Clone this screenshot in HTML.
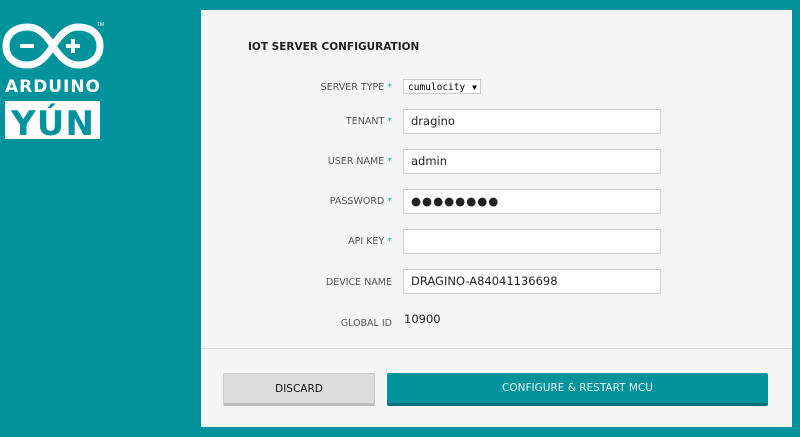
<!DOCTYPE html>
<html><head><style>
body{margin:0;width:800px;height:437px;background:#00939c;position:relative;overflow:hidden;font-family:"DejaVu Sans","Liberation Sans",sans-serif;}
.panel{position:absolute;left:201px;top:10px;width:591px;height:417px;background:#f5f5f5;}
.title{position:absolute;left:47px;top:31px;font-size:10.5px;font-weight:bold;color:#222;}
.lbl{position:absolute;right:400px;font-size:9.5px;color:#555;text-align:right;white-space:nowrap;}
.lbl i{font-style:normal;color:#3aa;margin-left:3px}
.inp{position:absolute;left:202px;width:256px;height:23px;background:#fff;border:1px solid #ccc;font-size:11.5px;color:#222;line-height:23px;padding-left:7px;box-sizing:content-box;width:249px}
.sel{position:absolute;left:202px;top:69px;width:78px;height:15px;background:#fff;border:1px solid #ccc;font-family:"DejaVu Sans Mono",monospace;font-size:9.5px;line-height:15px;padding-left:4px;box-sizing:border-box;}
.div{position:absolute;left:0;top:338px;width:591px;height:1px;background:#ddd}
.b1{position:absolute;left:22px;top:363px;width:152px;height:33px;background:#dcdcdc;border:1px solid #ccc;border-bottom:3px solid #bbb;border-radius:2px;box-sizing:border-box;text-align:center;line-height:30px;font-size:10.5px;color:#111}
.b2{position:absolute;left:186px;top:363px;width:381px;height:33px;background:#00939c;border-bottom:3px solid #067077;border-radius:2px;box-sizing:border-box;text-align:center;line-height:30px;font-size:10.5px;color:#e6f6f6}
</style></head><body>
<svg style="position:absolute;left:0;top:18px" width="110" height="125" viewBox="0 0 110 125">
<path d="M28 9 C14 9 6 17 6 28 C6 39 14 47 28 47 C40 47 48 36 53 28 C58 20 66 9 78 9 C92 9 100 17 100 28 C100 39 92 47 78 47 C66 47 58 36 53 28 C48 20 40 9 28 9Z" fill="none" stroke="#fff" stroke-width="7"/>
<rect x="20" y="26" width="14" height="4" fill="#fff"/>
<rect x="71" y="21" width="4" height="14" fill="#fff"/><rect x="66" y="26" width="14" height="4" fill="#fff"/>
<text x="97" y="8" font-size="5" fill="#fff" font-family="Liberation Sans">TM</text>
<text x="5" y="74" font-size="17" font-weight="bold" fill="#fff" font-family="DejaVu Sans" textLength="95">ARDUINO</text>
<rect x="5" y="83" width="95" height="38" fill="#fff"/>
<text x="11" y="117" font-size="34" font-weight="bold" fill="#00939c" font-family="DejaVu Sans" textLength="83">YÚN</text>
</svg>
<div class="panel">
<div class="title">IOT SERVER CONFIGURATION</div>
<div class="lbl" style="top:72px">SERVER TYPE<i>*</i></div>
<div class="sel">cumulocity <span style="float:right;margin-right:3px;font-size:8px">▼</span></div>
<div class="lbl" style="top:106px">TENANT<i>*</i></div><div class="inp" style="top:99px">dragino</div>
<div class="lbl" style="top:146px">USER NAME<i>*</i></div><div class="inp" style="top:139px">admin</div>
<div class="lbl" style="top:186px">PASSWORD<i>*</i></div><div class="inp" style="top:179px;letter-spacing:1px">●●●●●●●●</div>
<div class="lbl" style="top:226px">API KEY<i>*</i></div><div class="inp" style="top:219px"></div>
<div class="lbl" style="top:267px">DEVICE NAME</div><div class="inp" style="top:259px">DRAGINO-A84041136698</div>
<div class="lbl" style="top:308px">GLOBAL ID</div><div style="position:absolute;left:203px;top:302px;font-size:11.5px;color:#222">10900</div>
<div class="div"></div>
<div class="b1">DISCARD</div>
<div class="b2">CONFIGURE &amp; RESTART MCU</div>
</div>
</body></html>
